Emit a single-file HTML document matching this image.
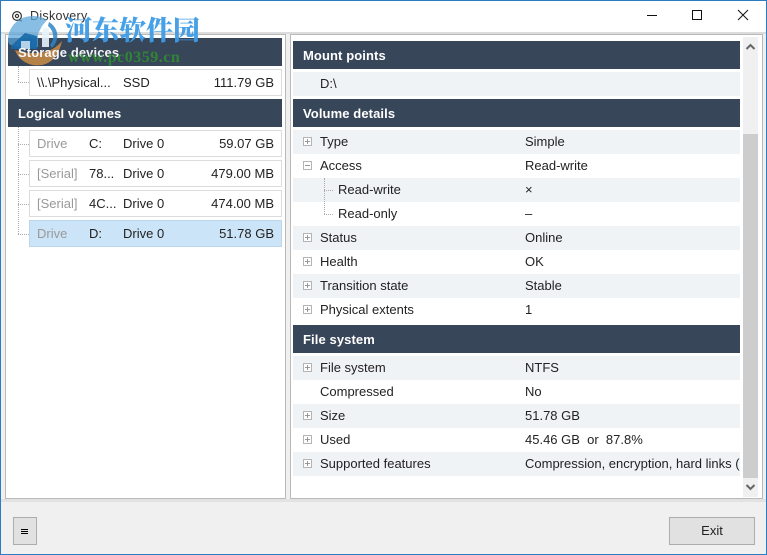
<!DOCTYPE html>
<html><head><meta charset="utf-8"><style>
html,body{margin:0;padding:0;background:#fff}
#w{position:relative;width:767px;height:555px;overflow:hidden;background:#f0f0f0;font:13px "Liberation Sans","Noto Sans CJK SC",sans-serif;color:#222}
#w div{position:absolute;box-sizing:border-box;white-space:nowrap}
.h{background:#374659;color:#fff;font-weight:bold;height:28px;line-height:29px;padding-left:10px;letter-spacing:.1px}
.it{left:29px;width:253px;height:27px;background:#fff;border:1px solid #dcdcdc}
.sel{background:#cce4f7;border-color:#bcd6ec}
.t{line-height:24px;height:24px}
.g{color:#999}
.r{left:293px;width:447px;height:24px}
.a{background:#f0f3f6}
.pm{left:303px;width:9px;height:9px;border:1px solid #b5b5b5;background:#fff}
.pm:before{content:"";position:absolute;left:1px;top:3px;width:5px;height:1px;background:#999}
.pl:after{content:"";position:absolute;left:3px;top:1px;width:1px;height:5px;background:#999}
.dv{border-left:1px dotted #aaa}
.dh{border-top:1px dotted #aaa}
</style></head><body><div id="w">
<div style="left:0;top:0;width:767px;height:32px;background:#fff"></div>
<div style="left:0;top:32px;width:767px;height:2px;background:#dcdcdc"></div>
<div style="left:0;top:499px;width:767px;height:3px;background:#e2e2e2"></div>
<div style="left:0;top:0;width:767px;height:1px;background:#2b7cc0"></div>
<div style="left:0;top:0;width:1px;height:555px;background:#2b7cc0"></div>
<div style="left:766px;top:0;width:1px;height:555px;background:#2b7cc0"></div>
<div style="left:0;top:554px;width:767px;height:1px;background:#2b7cc0"></div>
<div style="left:30px;top:8px;font-size:12.5px;line-height:16px;color:#333;letter-spacing:.3px">Diskovery</div>
<svg style="position:absolute;left:11px;top:10px" width="13" height="13" viewBox="0 0 13 13" fill="none" stroke="#333" stroke-width="1.2"><circle cx="6" cy="6" r="4.400"/><circle cx="6" cy="6" r="1.600"/><path d="M8 10l3 1"/></svg>
<svg style="position:absolute;left:646px;top:8px" width="112" height="16" viewBox="0 0 112 16" fill="none" stroke="#111" stroke-width="1"><path d="M1 7.500h10"/><rect x="46.500" y="2.500" width="9" height="9"/><path d="M92 2l10 10M102 2l-10 10"/></svg>

<div style="left:5px;top:34px;width:281px;height:465px;background:#fff;border:1px solid #b9b9b9"></div>
<div style="left:290px;top:34px;width:473px;height:465px;background:#fff;border:1px solid #b9b9b9"></div>

<div class="h" style="left:8px;top:38px;width:274px"></div>
<div class="dv" style="left:18px;top:66px;width:1px;height:16px"></div>
<div class="dh" style="left:18px;top:82px;width:11px;height:1px"></div>
<div class="it" style="top:69px"></div>
<div class="t" style="left:37px;top:71px">\\.\Physical...</div>
<div class="t" style="left:123px;top:71px">SSD</div>
<div class="t" style="right:493px;top:71px">111.79 GB</div>

<div class="h" style="left:8px;top:99px;width:274px">Logical volumes</div>
<div class="dv" style="left:18px;top:127px;width:1px;height:107px"></div>
<div class="dh" style="left:18px;top:144px;width:11px;height:1px"></div>
<div class="dh" style="left:18px;top:174px;width:11px;height:1px"></div>
<div class="dh" style="left:18px;top:204px;width:11px;height:1px"></div>
<div class="dh" style="left:18px;top:234px;width:11px;height:1px"></div>

<div class="it" style="top:130px"></div>
<div class="t g" style="left:37px;top:132px">Drive</div><div class="t" style="left:89px;top:132px">C:</div><div class="t" style="left:123px;top:132px">Drive 0</div><div class="t" style="right:493px;top:132px">59.07 GB</div>
<div class="it" style="top:160px"></div>
<div class="t g" style="left:37px;top:162px">[Serial]</div><div class="t" style="left:89px;top:162px">78...</div><div class="t" style="left:123px;top:162px">Drive 0</div><div class="t" style="right:493px;top:162px">479.00 MB</div>
<div class="it" style="top:190px"></div>
<div class="t g" style="left:37px;top:192px">[Serial]</div><div class="t" style="left:89px;top:192px">4C...</div><div class="t" style="left:123px;top:192px">Drive 0</div><div class="t" style="right:493px;top:192px">474.00 MB</div>
<div class="it sel" style="top:220px"></div>
<div class="t g" style="left:37px;top:222px">Drive</div><div class="t" style="left:89px;top:222px">D:</div><div class="t" style="left:123px;top:222px">Drive 0</div><div class="t" style="right:493px;top:222px">51.78 GB</div>

<div class="h" style="left:293px;top:41px;width:447px">Mount points</div>
<div class="r a" style="top:72px"></div><div class="t" style="left:320px;top:72px">D:\</div>
<div class="h" style="left:293px;top:99px;width:447px">Volume details</div>

<div class="r a" style="top:130px"></div>
<div class="r a" style="top:178px"></div>
<div class="r a" style="top:226px"></div>
<div class="r a" style="top:274px"></div>
<div class="pm pl" style="top:137px"></div><div class="t" style="left:320px;top:130px">Type</div><div class="t" style="left:525px;top:130px">Simple</div>
<div class="pm" style="top:161px"></div><div class="t" style="left:320px;top:154px">Access</div><div class="t" style="left:525px;top:154px">Read-write</div>
<div class="dv" style="left:324px;top:178px;width:1px;height:36px"></div>
<div class="dh" style="left:324px;top:190px;width:9px;height:1px"></div>
<div class="dh" style="left:324px;top:214px;width:9px;height:1px"></div>
<div class="t" style="left:338px;top:178px">Read-write</div><div class="t" style="left:525px;top:178px">×</div>
<div class="t" style="left:338px;top:202px">Read-only</div><div class="t" style="left:525px;top:202px">–</div>
<div class="pm pl" style="top:233px"></div><div class="t" style="left:320px;top:226px">Status</div><div class="t" style="left:525px;top:226px">Online</div>
<div class="pm pl" style="top:257px"></div><div class="t" style="left:320px;top:250px">Health</div><div class="t" style="left:525px;top:250px">OK</div>
<div class="pm pl" style="top:281px"></div><div class="t" style="left:320px;top:274px">Transition state</div><div class="t" style="left:525px;top:274px">Stable</div>
<div class="pm pl" style="top:305px"></div><div class="t" style="left:320px;top:298px">Physical extents</div><div class="t" style="left:525px;top:298px">1</div>

<div class="h" style="left:293px;top:325px;width:447px">File system</div>
<div class="r a" style="top:356px"></div>
<div class="r a" style="top:404px"></div>
<div class="r a" style="top:452px"></div>
<div class="pm pl" style="top:363px"></div><div class="t" style="left:320px;top:356px">File system</div><div class="t" style="left:525px;top:356px">NTFS</div>
<div class="t" style="left:320px;top:380px">Compressed</div><div class="t" style="left:525px;top:380px">No</div>
<div class="pm pl" style="top:411px"></div><div class="t" style="left:320px;top:404px">Size</div><div class="t" style="left:525px;top:404px">51.78 GB</div>
<div class="pm pl" style="top:435px"></div><div class="t" style="left:320px;top:428px">Used</div><div class="t" style="left:525px;top:428px">45.46 GB&nbsp; or&nbsp; 87.8%</div>
<div class="pm pl" style="top:459px"></div><div class="t" style="left:320px;top:452px">Supported features</div><div class="t" style="left:525px;top:452px;width:218px;overflow:hidden">Compression, encryption, hard links (</div>

<div style="left:743px;top:37px;width:15px;height:460px;background:#f0f0f0"></div>
<div style="left:743px;top:134px;width:15px;height:344px;background:#cdcdcd"></div>
<svg style="position:absolute;left:743px;top:41px" width="15" height="12" viewBox="0 0 15 12" fill="none" stroke="#666" stroke-width="2"><path d="M3.500 8l4-4 4 4"/></svg>
<svg style="position:absolute;left:743px;top:482px" width="15" height="12" viewBox="0 0 15 12" fill="none" stroke="#666" stroke-width="2"><path d="M3.500 3l4 4 4-4"/></svg>

<div style="left:13px;top:517px;width:24px;height:28px;background:#e1e1e1;border:1px solid #adadad"></div>
<div style="left:21px;top:529px;width:7px;height:1px;background:#000"></div>
<div style="left:21px;top:531px;width:7px;height:1px;background:#000"></div>
<div style="left:21px;top:533px;width:7px;height:1px;background:#000"></div>
<div style="left:669px;top:517px;width:86px;height:28px;background:#e1e1e1;border:1px solid #adadad;text-align:center;line-height:26px">Exit</div>

<svg style="position:absolute;left:6px;top:14px" width="58" height="54" viewBox="0 0 58 54">
<path d="M9 36C13 47 24 53 36 51C46 49 53 41 56 27C50 34 44 37 38 38C28 40 17 39 9 36Z" fill="#cf8f45" opacity=".82"/>
<path d="M2 27C2 12 13 2 27 2C34 2 38 4 41 6L36 12L32 20V33L22 34C14 34 6 32 3 30Z" fill="#5aa3da" opacity=".72"/>
<path d="M5 32L19 19L31 22V35H5Z" fill="#1668a8" opacity=".9"/>
<path d="M15 27h9v8h-9z" fill="#d9ecf8" opacity=".8"/>
<path d="M38 14h5v19h-7V17z" fill="#e8f3fb" opacity=".9"/>
<path d="M43 8C53 14 54 26 46 34L44 31C49 25 48 17 42 12Z" fill="#2f84c6" opacity=".85"/>
</svg>
<div style="left:18px;top:38px;height:29px;line-height:29px;color:#fff;font-weight:bold;letter-spacing:.1px;opacity:.95">Storage devices</div>
<div style="left:65px;top:11px;font:900 27px 'Noto Serif CJK SC','Noto Sans CJK SC',serif;line-height:36px;color:#3f9ce6;opacity:.95">河东软件园</div>
<div style="left:68px;top:48px;font:bold 16px 'Liberation Serif',serif;line-height:20px;letter-spacing:.5px;color:#2f8f2f;opacity:.85">www.pc0359.cn</div>
</div></body></html>
